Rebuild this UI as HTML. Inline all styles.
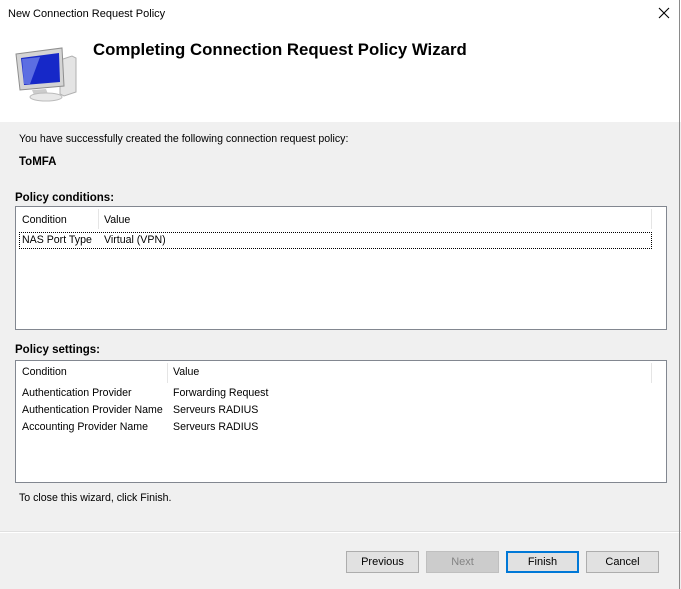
<!DOCTYPE html>
<html><head><meta charset="utf-8"><style>
*{margin:0;padding:0;box-sizing:border-box}
body{width:681px;height:589px;overflow:hidden;background:#f0f0f0;font-family:"Liberation Sans",sans-serif;font-size:10.6px;color:#000;position:relative}
.a{position:absolute;white-space:nowrap}
.top{position:absolute;left:0;top:0;width:681px;height:122px;background:#fff}
.box{position:absolute;background:#fff;border:1px solid #828790}
.btn{position:absolute;top:551px;width:73px;height:22px;border:1px solid #adadad;background:#e1e1e1;text-align:center;line-height:20px;font-size:11px}
</style></head><body>
<div class="top"></div>
<div class="a" style="left:8px;top:8px;font-size:11px">New Connection Request Policy</div>
<svg class="a" style="left:658px;top:7px" width="12" height="12" viewBox="0 0 12 12"><path d="M1 1L11 11M11 1L1 11" stroke="#000" stroke-width="1.1"/></svg>
<svg class="a" style="left:12px;top:40px" width="68" height="62" viewBox="0 0 68 62">
<polygon points="48,20 60,16 64,18 64,52 52,56 48,54" fill="#e4e4e4" stroke="#b0b0b0"/>
<polygon points="4,14 50,8 52,46 8,50" fill="#d4d4d4" stroke="#8e8e8e"/>
<polygon points="9,18 47,13 48,42 12,45" fill="#1628c8"/>
<polygon points="10,19 28,17 18,44 12,44" fill="#8c9cf4" opacity=".6"/>
<polygon points="20,50 34,49 36,54 22,55" fill="#ccc"/>
<ellipse cx="34" cy="57" rx="16" ry="4" fill="#e8e8e8" stroke="#bbb"/>
</svg>
<div class="a" style="left:93px;top:40px;font-size:16.8px;font-weight:bold">Completing Connection Request Policy Wizard</div>
<div class="a" style="left:19px;top:133px">You have successfully created the following connection request policy:</div>
<div class="a" style="left:19px;top:156px;font-weight:bold;font-size:11.5px">ToMFA</div>
<div class="a" style="left:15px;top:192px;font-weight:bold;font-size:11.5px">Policy conditions:</div>
<div class="box" style="left:15px;top:206px;width:652px;height:124px">
<div class="a" style="left:82px;top:2px;width:1px;height:20px;background:#e5e5e5"></div>
<div class="a" style="left:635px;top:2px;width:1px;height:20px;background:#e5e5e5"></div>
<div class="a" style="left:6px;top:7px">Condition</div>
<div class="a" style="left:88px;top:7px">Value</div>
<div class="a" style="left:3px;top:25px;width:633px;height:17px;border:1px dotted #000"></div>
<div class="a" style="left:6px;top:27px">NAS Port Type</div>
<div class="a" style="left:88px;top:27px">Virtual (VPN)</div>
</div>
<div class="a" style="left:15px;top:344px;font-weight:bold;font-size:11.5px">Policy settings:</div>
<div class="box" style="left:15px;top:360px;width:652px;height:123px">
<div class="a" style="left:151px;top:2px;width:1px;height:20px;background:#e5e5e5"></div>
<div class="a" style="left:635px;top:2px;width:1px;height:20px;background:#e5e5e5"></div>
<div class="a" style="left:6px;top:5px">Condition</div>
<div class="a" style="left:157px;top:5px">Value</div>
<div class="a" style="left:6px;top:26px">Authentication Provider</div>
<div class="a" style="left:157px;top:26px">Forwarding Request</div>
<div class="a" style="left:6px;top:43px">Authentication Provider Name</div>
<div class="a" style="left:157px;top:43px">Serveurs RADIUS</div>
<div class="a" style="left:6px;top:60px">Accounting Provider Name</div>
<div class="a" style="left:157px;top:60px">Serveurs RADIUS</div>
</div>
<div class="a" style="left:19px;top:492px">To close this wizard, click Finish.</div>
<div class="a" style="left:0;top:532px;width:681px;height:1px;background:#fff"></div>
<div class="a" style="left:0;top:531px;width:681px;height:1px;background:#e0e0e0"></div>
<div class="btn" style="left:346px">Previous</div>
<div class="btn" style="left:426px;background:#cccccc;border-color:#bfbfbf;color:#838383">Next</div>
<div class="btn" style="left:506px;border:2px solid #0078d7;line-height:18px">Finish</div>
<div class="btn" style="left:586px">Cancel</div>
<div class="a" style="left:679px;top:0;width:1px;height:589px;background:#8a8a8a"></div>
</body></html>
